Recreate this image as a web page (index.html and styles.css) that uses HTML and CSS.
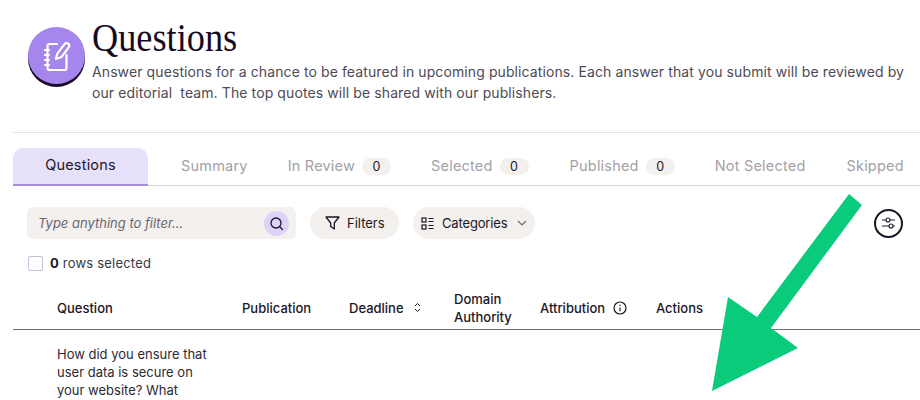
FILE: index.html
```html
<!DOCTYPE html>
<html lang="en">
<head>
<meta charset="utf-8">
<title>Questions</title>
<link rel="stylesheet" href="styles.css">
</head>
<body>
<div class="page">
  <header class="head">
    <div class="badge">
      <svg width="30" height="32" viewBox="0 0 30 32" fill="none" stroke="#fff" stroke-width="2.200" stroke-linecap="round" stroke-linejoin="round">
        <path d="M15 4H7.500a2 2 0 0 0-2 2v22a2 2 0 0 0 2 2h15a2 2 0 0 0 2-2V15"/>
        <path d="M3 10h4M3 15h4M3 20h4M3 25h4"/>
        <path d="M14 19l1.200-5.200L22.500 4.200a2.600 2.600 0 0 1 4.300 3L19.500 17z"/>
      </svg>
    </div>
    <div class="head-text">
      <h1 class="title">Questions</h1>
      <p class="sub">Answer questions for a chance to be featured in upcoming publications. Each answer that you submit will be reviewed by<br>our editorial&nbsp; team. The top quotes will be shared with our publishers.</p>
    </div>
  </header>
  <nav class="tabs">
    <span class="tab tab-active">Questions</span>
    <span class="tab t-summary">Summary</span>
    <span class="tab t-review">In Review <b class="pill">0</b></span>
    <span class="tab t-selected">Selected <b class="pill">0</b></span>
    <span class="tab t-published">Published <b class="pill">0</b></span>
    <span class="tab t-not">Not Selected</span>
    <span class="tab t-skipped">Skipped</span>
  </nav>
  <div class="toolbar">
    <div class="search">
      <span class="placeholder">Type anything to filter...</span>
      <span class="search-btn">
        <svg width="15" height="15" viewBox="0 0 15 15" fill="none" stroke="#1c1626" stroke-width="1.300" stroke-linecap="round"><circle cx="7" cy="7" r="5"/><path d="M10.700 10.700L13.500 13.500"/></svg>
      </span>
    </div>
    <button class="chip chip-filters">
      <svg width="15" height="14" viewBox="0 0 15 14" fill="none" stroke="#1c1626" stroke-width="1.300" stroke-linejoin="round"><path d="M1 1h13L9.300 7v6l-3.600-2.500V7z"/></svg>
      Filters
    </button>
    <button class="chip chip-cats">
      <svg width="13" height="13" viewBox="0 0 13 13" fill="none" stroke="#1c1626" stroke-width="1.200"><rect x="1" y="1" width="4" height="4"/><rect x="1" y="8" width="4" height="4"/><path d="M7.500 1.500H12.500M7.500 4.500H12.500M7.500 8.500H12.500M7.500 11.500H12.500"/></svg>
      Categories
      <svg class="caret" width="10" height="6" viewBox="0 0 10 6" fill="none" stroke="#6b6672" stroke-width="1.100"><path d="M1 1l4 4 4-4"/></svg>
    </button>
    <button class="round">
      <svg width="15" height="14" viewBox="0 0 15 14" fill="none" stroke="#1c1626" stroke-width="1.100"><path d="M1 4h4M9 4h5M1 10h7M12 10h2"/><circle cx="7" cy="4" r="2"/><circle cx="10" cy="10" r="2"/></svg>
    </button>
  </div>
  <div class="selected"><span class="check"></span><span><strong>0</strong> rows selected</span></div>
  <div class="thead">
    <span>Question</span>
    <span>Publication</span>
    <span class="th-icon">Deadline
      <svg width="7" height="11" viewBox="0 0 7 11" fill="none" stroke="#1c1626" stroke-width="1"><path d="M1 4l2.500-2.500L6 4M1 7l2.500 2.500L6 7"/></svg>
    </span>
    <span>Domain<br>Authority</span>
    <span class="th-icon th-attr">Attribution
      <svg width="14" height="14" viewBox="0 0 14 14" fill="none" stroke="#1c1626" stroke-width="1.200"><circle cx="7" cy="7" r="6"/><path d="M7 6.500V10.200M7 3.800V5"/></svg>
    </span>
    <span>Actions</span>
  </div>
  <div class="row-q">How did you ensure that<br>user data is secure on<br>your website? What</div>
</div>
<svg class="arrow" width="920" height="400" viewBox="0 0 920 400"><polygon fill="#0acb7c" points="849,194 862,205 771,328 798,348 712,391 728,297 757,317"/></svg>
</body>
</html>
```
FILE: styles.css
```css
* { box-sizing: border-box; }
html, body { margin: 0; padding: 0; }
body { width: 920px; height: 400px; overflow: hidden; background: #fff; color: #1c1626; font-family: Inter, "Liberation Sans", sans-serif; position: relative; }
.page { padding-left: 13px; }
.head { display: flex; align-items: flex-start; gap: 7px; height: 133px; padding: 27px 0 0 15px; border-bottom: 1px solid #e4e2e4; }
.badge { width: 57px; height: 57px; flex: none; border-radius: 50%; background: #a586ec; box-shadow: 0 3px 0 #1c0b2b; display: flex; align-items: center; justify-content: center; }
.head-text { margin-top: -14px; white-space: nowrap; }
.title { margin: 0; font-family: "Liberation Serif", serif; font-weight: 400; font-size: 41px; line-height: 48px; color: #160a1f; transform: scaleX(0.885); transform-origin: left center; }
.sub { margin: 0; font-size: 14px; line-height: 21px; color: #4e4a55; letter-spacing: 0.1px; }
.tabs { display: flex; align-items: flex-end; height: 38px; margin-top: 15px; border-bottom: 1px solid #d9d7da; white-space: nowrap; font-size: 14.500px; color: #a3a1a6; letter-spacing: 0.2px; }
.tab { display: flex; align-items: center; gap: 7px; height: 37px; padding-bottom: 3px; }
.tab-active { width: 135px; justify-content: center; height: 38px; margin-bottom: -1px; padding-bottom: 4px; background: #e6e0fa; border-bottom: 2px solid #a58fd8; border-radius: 10px 10px 0 0; color: #1c1626; }
.t-summary { margin-left: 33px; }
.t-review { margin-left: 40px; }
.t-selected { margin-left: 40px; }
.t-published { margin-left: 41px; }
.t-not { margin-left: 40px; }
.t-skipped { margin-left: 41px; }
.pill { display: inline-flex; align-items: center; justify-content: center; width: 29px; height: 17px; margin-bottom: -2px; border-radius: 9px; background: #f3f0ed; color: #1c1626; font-weight: 400; font-size: 12.500px; }
.toolbar { display: flex; align-items: center; gap: 14px; height: 32px; margin-top: 21px; padding-left: 14px; }
.search { display: flex; align-items: center; justify-content: space-between; width: 269px; height: 32px; padding: 0 7px 0 11px; background: #f3f0ed; border-radius: 6px; }
.placeholder { font-style: italic; font-size: 13px; color: #6b6672; }
.search-btn { display: flex; align-items: center; justify-content: center; width: 25px; height: 25px; border-radius: 50%; background: #dcd4f8; }
.chip { display: flex; align-items: center; height: 32px; border: 0; border-radius: 16px; background: #f3f0ed; font: inherit; font-size: 13px; color: #1c1626; padding: 0; }
.chip-filters { width: 89px; padding-left: 15px; gap: 7px; }
.chip-cats { width: 122px; padding-left: 8px; gap: 8px; letter-spacing: -0.15px; }
.caret { margin-left: 2px; }
.round { display: flex; align-items: center; justify-content: center; width: 29px; height: 29px; padding: 0; margin-left: auto; margin-right: 17px; border: 2px solid #1c1626; border-radius: 50%; background: #fff; }
.selected { display: flex; align-items: center; gap: 7px; height: 16px; margin-top: 16px; padding-left: 15px; font-size: 13px; letter-spacing: 0.2px; color: #3a3640; }
.selected strong { color: #1c1626; }
.check { width: 15px; height: 15px; border: 1.500px solid #c5bfd8; border-radius: 2px; background: #fff; }
.thead { display: grid; grid-template-columns: 185px 107px 105px 86px 116px 1fr; align-items: center; height: 44px; margin-top: 15px; padding-left: 44px; border-bottom: 1px solid #6f6d72; font-size: 13px; line-height: 18px; font-weight: 500; color: #1c1626; }
.th-icon { display: flex; align-items: center; gap: 10px; }
.th-attr { gap: 8px; }
.row-q { padding: 15px 0 0 44px; font-size: 13px; line-height: 18px; color: #2d2933; }
.arrow { position: absolute; left: 0; top: 0; pointer-events: none; }
```
